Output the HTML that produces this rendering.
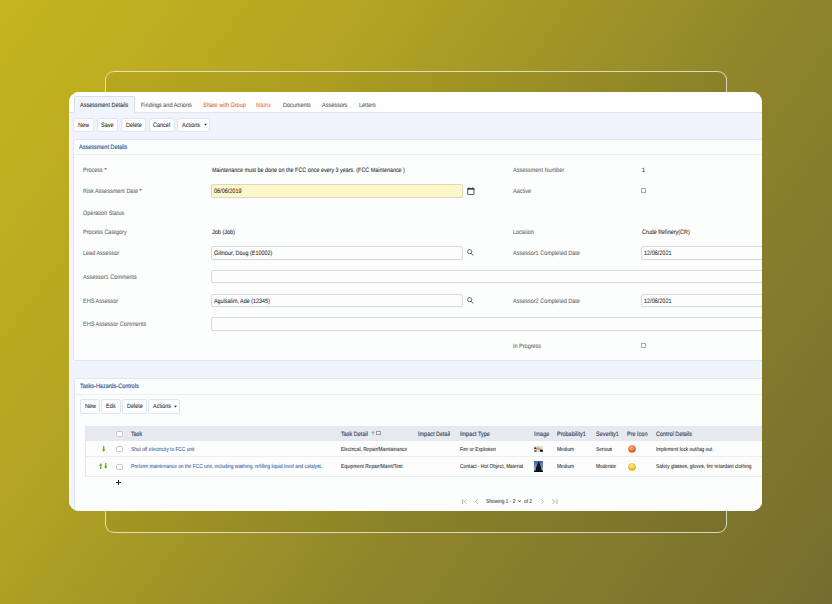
<!DOCTYPE html>
<html><head><meta charset="utf-8"><style>
html,body{margin:0;padding:0;width:832px;height:604px;overflow:hidden}
body{background:linear-gradient(126deg,#c6b51e 0%,#b3a423 30%,#8f862b 62%,#756d2e 100%);position:relative;font-family:"Liberation Sans",sans-serif}
.outline{position:absolute;left:105px;top:71px;width:622px;height:462px;box-sizing:border-box;border:1px solid rgba(238,236,228,.8);border-radius:9px;background:rgba(0,0,0,.035)}
.card{position:absolute;left:69px;top:92px;width:693px;height:419px;border-radius:10px;overflow:hidden;background:#fff}
.wrap{position:absolute;left:-69px;top:-92px;width:832px;height:604px}
.t{position:absolute;line-height:1;white-space:nowrap;font-family:"Liberation Sans",sans-serif;transform-origin:0 0;text-rendering:geometricPrecision;-webkit-text-stroke:0.07px currentColor}
.r{position:absolute}
</style></head><body>
<div class="outline"></div>
<div class="card"><div class="wrap">
<div class="r" style="left:69px;top:92px;width:700px;height:20px;background:#fdfefd"></div>
<div class="r" style="left:69px;top:112px;width:700px;height:1px;background:#e0e3e8"></div>
<div class="r" style="left:69px;top:113px;width:700px;height:420px;background:#f0f4fc"></div>
<div class="r" style="left:74px;top:96px;width:61px;height:17px;background:#f0f4fc;border:1px solid #d9dde4;border-bottom:none;border-radius:2px 2px 0 0;box-sizing:border-box"></div>
<div class="t" style="left:80.20px;top:103px;font-size:6.3px;color:#2b2b2b;transform:scaleX(0.8730);">Assessment Details</div>
<div class="t" style="left:141.20px;top:103px;font-size:6.3px;color:#555;transform:scaleX(0.8730);">Findings and Actions</div>
<div class="t" style="left:202.80px;top:103px;font-size:6.3px;color:#e65d3c;transform:scaleX(0.8730);">Share with Group</div>
<div class="t" style="left:256.00px;top:103px;font-size:6.3px;color:#f07b3e;transform:scaleX(0.8730);">Matrix</div>
<div class="t" style="left:282.90px;top:103px;font-size:6.3px;color:#555;transform:scaleX(0.8730);">Documents</div>
<div class="t" style="left:322.30px;top:103px;font-size:6.3px;color:#555;transform:scaleX(0.8730);">Assessors</div>
<div class="t" style="left:359.10px;top:103px;font-size:6.3px;color:#555;transform:scaleX(0.8730);">Letters</div>
<div class="r" style="left:73px;top:118px;width:21px;height:14px;background:#fdfdff;border:1px solid #dde5f8;border-radius:2px;box-sizing:border-box"></div>
<div class="t" style="left:78.00px;top:123px;font-size:6.3px;color:#2a2a2a;transform:scaleX(0.8730);">New</div>
<div class="r" style="left:97px;top:118px;width:21px;height:14px;background:#fdfdff;border:1px solid #dde5f8;border-radius:2px;box-sizing:border-box"></div>
<div class="t" style="left:101.23px;top:123px;font-size:6.3px;color:#2a2a2a;transform:scaleX(0.8730);">Save</div>
<div class="r" style="left:121px;top:118px;width:25px;height:14px;background:#fdfdff;border:1px solid #dde5f8;border-radius:2px;box-sizing:border-box"></div>
<div class="t" style="left:125.55px;top:123px;font-size:6.3px;color:#2a2a2a;transform:scaleX(0.8730);">Delete</div>
<div class="r" style="left:149px;top:118px;width:26px;height:14px;background:#fdfdff;border:1px solid #dde5f8;border-radius:2px;box-sizing:border-box"></div>
<div class="t" style="left:153.44px;top:123px;font-size:6.3px;color:#2a2a2a;transform:scaleX(0.8730);">Cancel</div>
<div class="r" style="left:177px;top:118px;width:33px;height:14px;background:#fdfdff;border:1px solid #dde5f8;border-radius:2px;box-sizing:border-box"></div>
<div class="t" style="left:182.48px;top:123px;font-size:6.3px;color:#2a2a2a;transform:scaleX(0.8730);">Actions</div>
<svg class="r" style="left:203.8px;top:123.3px" width="3" height="3" viewBox="0 0 3 3"><polygon points="0.1,0.8 2.9,0.8 1.5,2.4" fill="#222"/></svg>
<div class="r" style="left:73px;top:139px;width:760px;height:222px;background:#fcfdfd;border:1px solid #dde5f8;border-radius:2px;box-sizing:border-box"></div>
<div class="t" style="left:79.40px;top:145px;font-size:6.3px;color:#2a5596;transform:scaleX(0.8730);-webkit-text-stroke:0.15px currentColor">Assessment Details</div>
<div class="r" style="left:74px;top:154px;width:760px;height:1px;background:#eceff2"></div>
<div class="t" style="left:83.00px;top:168px;font-size:6.3px;color:#666;transform:scaleX(0.8730);">Process<span style="color:#e0302f"> *</span></div>
<div class="t" style="left:83.00px;top:189px;font-size:6.3px;color:#666;transform:scaleX(0.8730);">Risk Assessment Date<span style="color:#e0302f"> *</span></div>
<div class="t" style="left:83.00px;top:211px;font-size:6.3px;color:#666;transform:scaleX(0.8730);">Operation Status</div>
<div class="t" style="left:83.00px;top:230px;font-size:6.3px;color:#666;transform:scaleX(0.8730);">Process Category</div>
<div class="t" style="left:83.00px;top:251px;font-size:6.3px;color:#666;transform:scaleX(0.8730);">Lead Assessor</div>
<div class="t" style="left:83.00px;top:275px;font-size:6.3px;color:#666;transform:scaleX(0.8730);">Assessor1 Comments</div>
<div class="t" style="left:83.00px;top:299px;font-size:6.3px;color:#666;transform:scaleX(0.8730);">EHS Assessor</div>
<div class="t" style="left:83.00px;top:322px;font-size:6.3px;color:#666;transform:scaleX(0.8730);">EHS Assessor Comments</div>
<div class="t" style="left:212.00px;top:168px;font-size:6.3px;color:#2a2a2a;transform:scaleX(0.8571);">Maintenance must be done on the FCC once every 3 years. (FCC Maintenance )</div>
<div class="r" style="left:211px;top:184px;width:252px;height:14px;background:#fdf6c8;border:1px solid #d9d7c8;border-radius:2px;box-sizing:border-box;box-shadow:0 0.5px 0.5px rgba(0,0,0,.04)"></div>
<div class="t" style="left:214.00px;top:189px;font-size:6.3px;color:#2a2a2a;transform:scaleX(0.8730);">06/06/2019</div>
<div class="t" style="left:212.00px;top:230px;font-size:6.3px;color:#2a2a2a;transform:scaleX(0.8730);">Job (Job)</div>
<div class="r" style="left:211px;top:246px;width:252px;height:14px;background:#fdfdfd;border:1px solid #dadada;border-radius:2px;box-sizing:border-box;box-shadow:0 0.5px 0.5px rgba(0,0,0,.04)"></div>
<div class="t" style="left:214.20px;top:251px;font-size:6.3px;color:#2a2a2a;transform:scaleX(0.8571);">Gilmour, Doug (E10002)</div>
<div class="r" style="left:211px;top:270px;width:700px;height:13px;background:#fdfdfd;border:1px solid #dadada;border-radius:2px;box-sizing:border-box;box-shadow:0 0.5px 0.5px rgba(0,0,0,.04)"></div>
<div class="r" style="left:211px;top:294px;width:252px;height:13px;background:#fdfdfd;border:1px solid #dadada;border-radius:2px;box-sizing:border-box;box-shadow:0 0.5px 0.5px rgba(0,0,0,.04)"></div>
<div class="t" style="left:214.20px;top:299px;font-size:6.3px;color:#2a2a2a;transform:scaleX(0.8571);">Agulsalim, Ade (12345)</div>
<div class="r" style="left:211px;top:317px;width:700px;height:14px;background:#fdfdfd;border:1px solid #dadada;border-radius:2px;box-sizing:border-box;box-shadow:0 0.5px 0.5px rgba(0,0,0,.04)"></div>
<svg class="r" style="left:466.7px;top:187px" width="8" height="8" viewBox="0 0 8 8"><rect x="0.75" y="1.55" width="6.2" height="6.0" rx="0.4" fill="#fff" stroke="#3a3a3a" stroke-width="0.85"/><rect x="0.4" y="1.15" width="6.9" height="1.5" fill="#3a3a3a"/><rect x="1.6" y="0.2" width="0.75" height="1.4" fill="#3a3a3a"/><rect x="5.35" y="0.2" width="0.75" height="1.4" fill="#3a3a3a"/></svg>
<svg class="r" style="left:466.7px;top:249.0px" width="7" height="7" viewBox="0 0 7 7"><circle cx="2.6" cy="2.7" r="2.1" fill="none" stroke="#4a4a4a" stroke-width="0.8"/><line x1="4.0" y1="4.1" x2="6.2" y2="6.5" stroke="#555" stroke-width="0.95"/></svg>
<svg class="r" style="left:466.7px;top:296.8px" width="7" height="7" viewBox="0 0 7 7"><circle cx="2.6" cy="2.7" r="2.1" fill="none" stroke="#4a4a4a" stroke-width="0.8"/><line x1="4.0" y1="4.1" x2="6.2" y2="6.5" stroke="#555" stroke-width="0.95"/></svg>
<div class="t" style="left:512.90px;top:168px;font-size:6.3px;color:#666;transform:scaleX(0.8730);">Assessment Number</div>
<div class="t" style="left:642.00px;top:168px;font-size:6.3px;color:#2a2a2a;transform:scaleX(0.8730);">1</div>
<div class="t" style="left:512.90px;top:189px;font-size:6.3px;color:#666;transform:scaleX(0.8730);">Aactive</div>
<div class="r" style="left:641px;top:188px;width:5px;height:5.2px;border:0.9px solid #a8a8ae;border-radius:0.6px;box-sizing:border-box;background:#fff"></div>
<div class="t" style="left:512.90px;top:230px;font-size:6.3px;color:#666;transform:scaleX(0.8730);">Location</div>
<div class="t" style="left:641.90px;top:230px;font-size:6.3px;color:#2a2a2a;transform:scaleX(0.8571);">Crude Refinery(CR)</div>
<div class="t" style="left:512.90px;top:251px;font-size:6.3px;color:#666;transform:scaleX(0.8730);">Assessor1 Completed Date</div>
<div class="r" style="left:641px;top:246px;width:300px;height:14px;background:#fdfdfd;border:1px solid #dadada;border-radius:2px;box-sizing:border-box;box-shadow:0 0.5px 0.5px rgba(0,0,0,.04)"></div>
<div class="t" style="left:644.00px;top:251px;font-size:6.3px;color:#2a2a2a;transform:scaleX(0.8730);">12/06/2021</div>
<div class="t" style="left:512.90px;top:299px;font-size:6.3px;color:#666;transform:scaleX(0.8730);">Assessor2 Completed Date</div>
<div class="r" style="left:641px;top:294px;width:300px;height:13px;background:#fdfdfd;border:1px solid #dadada;border-radius:2px;box-sizing:border-box;box-shadow:0 0.5px 0.5px rgba(0,0,0,.04)"></div>
<div class="t" style="left:644.00px;top:299px;font-size:6.3px;color:#2a2a2a;transform:scaleX(0.8730);">12/06/2021</div>
<div class="t" style="left:512.90px;top:344px;font-size:6.3px;color:#666;transform:scaleX(0.8730);">In Progress</div>
<div class="r" style="left:641px;top:342.8px;width:5px;height:5.2px;border:0.9px solid #a8a8ae;border-radius:0.6px;box-sizing:border-box;background:#fff"></div>
<div class="r" style="left:74px;top:378px;width:760px;height:200px;background:#fcfdfd;border:1px solid #dde5f8;border-radius:2px;box-sizing:border-box"></div>
<div class="t" style="left:80.20px;top:384px;font-size:6.3px;color:#2a5596;transform:scaleX(0.8730);-webkit-text-stroke:0.15px currentColor">Tasks-Hazards-Controls</div>
<div class="r" style="left:75px;top:394px;width:760px;height:1px;background:#eceff2"></div>
<div class="r" style="left:80px;top:399px;width:20px;height:15px;background:#fdfdff;border:1px solid #dde5f8;border-radius:2px;box-sizing:border-box"></div>
<div class="t" style="left:84.50px;top:404px;font-size:6.3px;color:#2a2a2a;transform:scaleX(0.8730);">New</div>
<div class="r" style="left:101px;top:399px;width:20px;height:15px;background:#fdfdff;border:1px solid #dde5f8;border-radius:2px;box-sizing:border-box"></div>
<div class="t" style="left:106.26px;top:404px;font-size:6.3px;color:#2a2a2a;transform:scaleX(0.8730);">Edit</div>
<div class="r" style="left:122px;top:399px;width:25px;height:15px;background:#fdfdff;border:1px solid #dde5f8;border-radius:2px;box-sizing:border-box"></div>
<div class="t" style="left:126.55px;top:404px;font-size:6.3px;color:#2a2a2a;transform:scaleX(0.8730);">Delete</div>
<div class="r" style="left:148px;top:399px;width:32px;height:15px;background:#fdfdff;border:1px solid #dde5f8;border-radius:2px;box-sizing:border-box"></div>
<div class="t" style="left:152.98px;top:404px;font-size:6.3px;color:#2a2a2a;transform:scaleX(0.8730);">Actions</div>
<svg class="r" style="left:173.8px;top:404.8px" width="3" height="3" viewBox="0 0 3 3"><polygon points="0.1,0.8 2.9,0.8 1.5,2.4" fill="#222"/></svg>
<div class="r" style="left:85px;top:426px;width:760px;height:15px;background:#e6eaf0"></div>
<div class="r" style="left:85px;top:441px;width:760px;height:16px;background:#fdfdfd"></div>
<div class="r" style="left:85px;top:456px;width:760px;height:1px;background:#eceef1"></div>
<div class="r" style="left:85px;top:457px;width:760px;height:19px;background:#fdfdfd"></div>
<div class="r" style="left:85px;top:476px;width:760px;height:1px;background:#e6e9ed"></div>
<div class="r" style="left:85px;top:426px;width:1px;height:51px;background:#e3e6eb"></div>
<div class="t" style="left:131.00px;top:432px;font-size:6.3px;color:#36425a;transform:scaleX(0.8730);-webkit-text-stroke:0.13px currentColor">Task</div>
<div class="t" style="left:340.70px;top:432px;font-size:6.3px;color:#36425a;transform:scaleX(0.8730);-webkit-text-stroke:0.13px currentColor">Task Detail</div>
<svg class="r" style="left:371px;top:430.5px" width="4" height="4.5" viewBox="0 0 4 4.5"><polygon points="2,0 3.8,2 2.5,2 2.5,4.5 1.5,4.5 1.5,2 0.2,2" fill="#a8a8a8"/></svg>
<div class="r" style="left:376.3px;top:430.9px;width:4.6px;height:4.1px;border:1px solid #9a9a9a;box-sizing:border-box;background:#f4f4f4"></div>
<div class="t" style="left:418.10px;top:432px;font-size:6.3px;color:#36425a;transform:scaleX(0.8730);-webkit-text-stroke:0.13px currentColor">Impact Detail</div>
<div class="t" style="left:459.90px;top:432px;font-size:6.3px;color:#36425a;transform:scaleX(0.8730);-webkit-text-stroke:0.13px currentColor">Impact Type</div>
<div class="t" style="left:533.70px;top:432px;font-size:6.3px;color:#36425a;transform:scaleX(0.8730);-webkit-text-stroke:0.13px currentColor">Image</div>
<div class="t" style="left:557.40px;top:432px;font-size:6.3px;color:#36425a;transform:scaleX(0.8730);-webkit-text-stroke:0.13px currentColor">Probability1</div>
<div class="t" style="left:595.80px;top:432px;font-size:6.3px;color:#36425a;transform:scaleX(0.8730);-webkit-text-stroke:0.13px currentColor">Severity1</div>
<div class="t" style="left:627.30px;top:432px;font-size:6.3px;color:#36425a;transform:scaleX(0.8730);-webkit-text-stroke:0.13px currentColor">Pre Icon</div>
<div class="t" style="left:656.30px;top:432px;font-size:6.3px;color:#36425a;transform:scaleX(0.8730);-webkit-text-stroke:0.13px currentColor">Control Details</div>
<div class="r" style="left:116px;top:431.0px;width:6.8px;height:6.2px;border:0.8px solid #c6c6c6;border-radius:1.8px;box-sizing:border-box;background:#fff"></div>
<div class="r" style="left:116px;top:446.0px;width:6.8px;height:6.2px;border:0.8px solid #c6c6c6;border-radius:1.8px;box-sizing:border-box;background:#fff"></div>
<div class="r" style="left:116px;top:463.5px;width:6.8px;height:6.2px;border:0.8px solid #c6c6c6;border-radius:1.8px;box-sizing:border-box;background:#fff"></div>
<div class="t" style="left:131.00px;top:448px;font-size:5.8px;color:#315da3;transform:scaleX(0.8276);">Shut off electricity to FCC unit</div>
<div class="t" style="left:131.00px;top:465px;font-size:5.8px;color:#315da3;transform:scaleX(0.8276);">Preform maintenance on the FCC unit, including washing, refilling liquid level and catalyst.</div>
<div class="t" style="left:340.70px;top:448px;font-size:5.8px;color:#2a2a2a;transform:scaleX(0.8276);">Electrical, Repair/Maintainance</div>
<div class="t" style="left:340.70px;top:465px;font-size:5.8px;color:#2a2a2a;transform:scaleX(0.8276);">Equipment Repair/Maint/Test</div>
<div class="t" style="left:460.00px;top:448px;font-size:5.8px;color:#2a2a2a;transform:scaleX(0.8276);">Fire or Explosion</div>
<div class="t" style="left:460.00px;top:465px;font-size:5.8px;color:#2a2a2a;transform:scaleX(0.8276);">Contact - Hot Object, Material</div>
<div class="t" style="left:557.40px;top:448px;font-size:5.8px;color:#2a2a2a;transform:scaleX(0.8276);">Medium</div>
<div class="t" style="left:557.40px;top:465px;font-size:5.8px;color:#2a2a2a;transform:scaleX(0.8276);">Medium</div>
<div class="t" style="left:595.80px;top:448px;font-size:5.8px;color:#2a2a2a;transform:scaleX(0.8276);">Serious</div>
<div class="t" style="left:595.80px;top:465px;font-size:5.8px;color:#2a2a2a;transform:scaleX(0.8276);">Moderate</div>
<div class="t" style="left:656.30px;top:448px;font-size:5.8px;color:#2a2a2a;transform:scaleX(0.8276);">Implement lock out/tag out</div>
<div class="t" style="left:656.30px;top:465px;font-size:5.8px;color:#2a2a2a;transform:scaleX(0.8276);">Safety glasses, gloves, fire retardant clothing</div>
<svg class="r" style="left:101.6px;top:446.0px" width="3.4" height="6" viewBox="0 0 3.6 5.6" preserveAspectRatio="none"><polygon points="1.8,5.6 3.6,3.1 2.5,3.1 2.5,0 1.1,0 1.1,3.1 0,3.1" fill="#6aae28"/></svg>
<svg class="r" style="left:98.8px;top:463.4px" width="3.4" height="6" viewBox="0 0 3.6 5.6" preserveAspectRatio="none"><polygon points="1.8,0 3.6,2.5 2.5,2.5 2.5,5.6 1.1,5.6 1.1,2.5 0,2.5" fill="#6aae28"/></svg>
<svg class="r" style="left:104.0px;top:463.4px" width="3.4" height="6" viewBox="0 0 3.6 5.6" preserveAspectRatio="none"><polygon points="1.8,5.6 3.6,3.1 2.5,3.1 2.5,0 1.1,0 1.1,3.1 0,3.1" fill="#6aae28"/></svg>
<svg class="r" style="left:533.6px;top:446.3px" width="9" height="6" viewBox="0 0 9 6"><rect width="9" height="6" fill="#e4e2dc"/><ellipse cx="4.3" cy="2.8" rx="2.6" ry="1.2" fill="#c9a86a"/><ellipse cx="1.2" cy="2.2" rx="1.1" ry="0.9" fill="#2a2a33"/><ellipse cx="1.5" cy="5.1" rx="1.4" ry="0.8" fill="#3a3f4a"/><ellipse cx="7.4" cy="4.7" rx="1.6" ry="1.2" fill="#111"/></svg>
<svg class="r" style="left:533.6px;top:460.7px" width="9" height="11" viewBox="0 0 9 11"><defs><linearGradient id="sky" x1="0" y1="0" x2="0" y2="1"><stop offset="0" stop-color="#3d62a8"/><stop offset="1" stop-color="#a9c3e0"/></linearGradient></defs><rect width="9" height="11" fill="url(#sky)"/><polygon points="1.2,11 2.2,6 3.5,3 4.2,0.5 5.2,0.5 5.8,3 7,6 8,11" fill="#16161c"/><rect x="0" y="9.6" width="9" height="1.4" fill="#0c0c0c"/></svg>
<svg class="r" style="left:627.5px;top:445.0px" width="8" height="8" viewBox="0 0 8 8"><defs><radialGradient id="go" cx="0.4" cy="0.3" r="0.7"><stop offset="0" stop-color="#ffc080"/><stop offset="0.6" stop-color="#f2792b"/><stop offset="1" stop-color="#d0581a"/></radialGradient></defs><circle cx="4" cy="4" r="3.5" fill="url(#go)" stroke="#b9561c" stroke-width="0.5"/></svg>
<svg class="r" style="left:627.5px;top:462.5px" width="8" height="8" viewBox="0 0 8 8"><defs><radialGradient id="gy" cx="0.45" cy="0.3" r="0.7"><stop offset="0" stop-color="#fff2b0"/><stop offset="0.6" stop-color="#f9cf22"/><stop offset="1" stop-color="#e0a810"/></radialGradient></defs><circle cx="4" cy="4" r="3.5" fill="url(#gy)" stroke="#c9a020" stroke-width="0.5"/></svg>
<div class="r" style="left:115.9px;top:481.5px;width:5.0px;height:1.2px;background:#2a2a2a"></div>
<div class="r" style="left:117.8px;top:479.6px;width:1.2px;height:5.0px;background:#2a2a2a"></div>
<svg class="r" style="left:461.5px;top:498.5px" width="6" height="5" viewBox="0 0 6 5"><line x1="0.6" y1="0" x2="0.6" y2="5" stroke="#8a8a8a" stroke-width="0.65"/><polyline points="4.5,0.3 2.3,2.5 4.5,4.7" fill="none" stroke="#8a8a8a" stroke-width="0.65"/></svg>
<svg class="r" style="left:475px;top:498.5px" width="3" height="5" viewBox="0 0 3 5"><polyline points="2.6,0.3 0.6,2.5 2.6,4.7" fill="none" stroke="#8a8a8a" stroke-width="0.65"/></svg>
<div class="t" style="left:486.40px;top:500px;font-size:5.8px;color:#353d52;transform:scaleX(0.8276);">Showing 1 - 2</div>
<svg class="r" style="left:518.3px;top:499.8px" width="3" height="2.5" viewBox="0 0 3 2.5"><polyline points="0.3,0.4 1.5,1.9 2.7,0.4" fill="none" stroke="#333" stroke-width="0.8"/></svg>
<div class="t" style="left:524.30px;top:500px;font-size:5.8px;color:#353d52;transform:scaleX(0.8276);">of 2</div>
<svg class="r" style="left:540.5px;top:498.5px" width="3" height="5" viewBox="0 0 3 5"><polyline points="0.4,0.3 2.4,2.5 0.4,4.7" fill="none" stroke="#8a8a8a" stroke-width="0.65"/></svg>
<svg class="r" style="left:551.5px;top:498.5px" width="6" height="5" viewBox="0 0 6 5"><polyline points="0.5,0.3 2.7,2.5 0.5,4.7" fill="none" stroke="#8a8a8a" stroke-width="0.65"/><line x1="5" y1="0" x2="5" y2="5" stroke="#8a8a8a" stroke-width="0.65"/></svg>
</div></div>
</body></html>
